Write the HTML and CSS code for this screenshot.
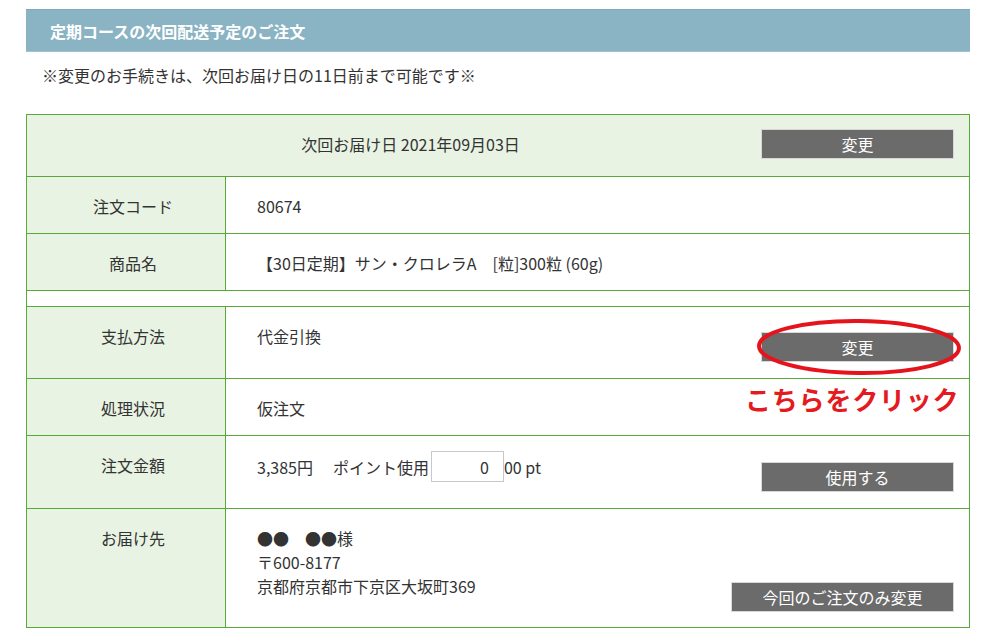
FILE: index.html
```html
<!DOCTYPE html>
<html lang="ja">

<head>
    <meta charset="UTF-8">
    <meta name="viewport" content="width=device-width, initial-scale=1.0">
    <title>定期コースの次回配送予定のご注文</title>
    <link rel="stylesheet" href="styles.css">
</head>

<body>
    <div class="page">
        <h2 class="title">定期コースの次回配送予定のご注文</h2>
        <p class="notice">※変更のお手続きは、次回お届け日の11日前まで可能です※</p>

        <table class="order">
            <tr>
                <td class="date-row" colspan="2">
                    <div class="date-inner">
                        <span class="date-text">次回お届け日 2021年09月03日</span>
                        <button class="btn btn-date">変更</button>
                    </div>
                </td>
            </tr>
            <tr>
                <th>注文コード</th>
                <td>80674</td>
            </tr>
            <tr>
                <th>商品名</th>
                <td>【30日定期】サン・クロレラA　[粒]300粒 (60g)</td>
            </tr>
            <tr>
                <td class="spacer" colspan="2"></td>
            </tr>
            <tr>
                <th>支払方法</th>
                <td>
                    <div class="cell-flex">
                        <span>代金引換</span>
                        <button class="btn btn-low">変更</button>
                    </div>
                </td>
            </tr>
            <tr>
                <th>処理状況</th>
                <td>仮注文</td>
            </tr>
            <tr>
                <th>注文金額</th>
                <td>
                    <div class="cell-flex">
                        <span class="price"><span class="yen">3,385円</span>ポイント使用 <input class="point" type="text" value="0">00 pt</span>
                        <button class="btn btn-point">使用する</button>
                    </div>
                </td>
            </tr>
            <tr>
                <th>お届け先</th>
                <td>
                    <div class="cell-flex">
                        <div class="address">
                            ●●　●●様<br>
                            〒600-8177<br>
                            京都府京都市下京区大坂町369
                        </div>
                        <button class="btn btn-wide">今回のご注文のみ変更</button>
                    </div>
                </td>
            </tr>
        </table>

        <!-- 説明用の注釈 -->
        <svg class="mark" width="210" height="62" viewBox="0 0 210 62">
            <ellipse cx="103" cy="30" rx="100" ry="26" fill="none" stroke="#e5141c" stroke-width="4" transform="rotate(0.6 103 30)"/>
        </svg>
        <div class="click-note">こちらをクリック</div>
    </div>
</body>

</html>
```

FILE: styles.css
```css
* {
    box-sizing: border-box;
    margin: 0;
    padding: 0;
}

body {
    background-color: #ffffff;
    color: #333333;
    font-family: "Noto Sans CJK JP", "Noto Sans", sans-serif;
    font-size: 16px;
}

.page {
    position: relative;
    width: 944px;
    margin-left: 26px;
    padding-top: 9px;
}

.title {
    height: 43px;
    line-height: 43px;
    padding-left: 24px;
    background-color: #8ab3c3;
    border-top: 1px solid #7fa9ba;
    border-bottom: 1px solid #9ec4d2;
    color: #ffffff;
    font-size: 16px;
    font-weight: bold;
}

.notice {
    margin-top: 11px;
    padding-left: 16px;
    line-height: 24px;
}

.order {
    width: 100%;
    margin-top: 27px;
    border-collapse: collapse;
    border: 1px solid #58a93a;
}

.order th,
.order td {
    border: 1px solid #58a93a;
    line-height: 24px;
    vertical-align: top;
    text-align: left;
}

.order th {
    width: 199px;
    padding: 17px 0 15px 14px;
    background-color: #e8f3e3;
    font-weight: normal;
    text-align: center;
}

.order td {
    padding: 17px 15px 15px 31px;
}

.order td.date-row {
    padding: 16px 15px 17px 33px;
    background-color: #e8f3e3;
}

.order td.spacer {
    height: 16px;
    padding: 0;
}

.date-inner {
    display: flex;
    align-items: center;
}

.date-text {
    flex: 1;
    text-align: center;
    margin-top: -2px;
}

.cell-flex {
    display: flex;
    justify-content: space-between;
    align-items: flex-start;
}

.btn {
    width: 193px;
    height: 30px;
    background-color: #6b6b6b;
    border: 1px solid #d8d8d8;
    color: #ffffff;
    font-family: "Noto Sans CJK JP", sans-serif;
    font-size: 16px;
    line-height: 26px;
}

.btn-date {
    margin-top: -2px;
}

.btn-low {
    margin-top: 8px;
    margin-bottom: 1px;
}

.btn-point {
    margin-top: 9px;
    margin-bottom: 1px;
}

.btn-wide {
    width: 223px;
    align-self: flex-end;
}

.price {
    display: flex;
    align-items: center;
    margin-top: -2px;
}

.yen {
    margin-right: 20px;
}

.point {
    width: 73px;
    height: 31px;
    margin-left: 2px;
    padding-right: 14px;
    border: 1px solid #c8c8c8;
    font-family: "Noto Sans CJK JP", "Noto Sans", sans-serif;
    font-size: 16px;
    color: #333333;
    text-align: right;
}

.address {
    padding-bottom: 14px;
}

.mark {
    position: absolute;
    left: 730px;
    top: 317px;
}

.click-note {
    position: absolute;
    left: 719px;
    top: 381px;
    color: #e51a20;
    font-size: 26px;
    font-weight: bold;
    letter-spacing: 0.8px;
    line-height: 36px;
}
```
